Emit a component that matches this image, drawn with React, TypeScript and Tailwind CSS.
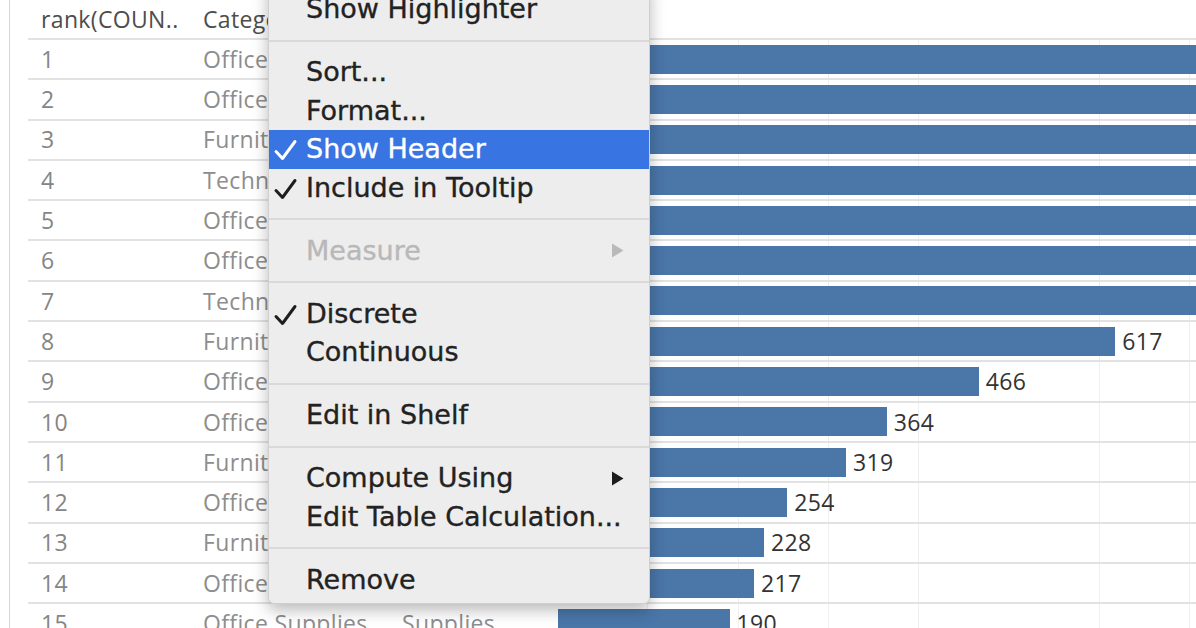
import React from "react";

type Row = { rank: number; cat: string; sub: string; value: number };

const rows: Row[] = [
  { rank: 1, cat: "Office Supplies", sub: "Binders", value: 1523 },
  { rank: 2, cat: "Office Supplies", sub: "Paper", value: 1370 },
  { rank: 3, cat: "Furniture", sub: "Furnishings", value: 957 },
  { rank: 4, cat: "Technology", sub: "Phones", value: 889 },
  { rank: 5, cat: "Office Supplies", sub: "Storage", value: 846 },
  { rank: 6, cat: "Office Supplies", sub: "Art", value: 796 },
  { rank: 7, cat: "Technology", sub: "Accessories", value: 775 },
  { rank: 8, cat: "Furniture", sub: "Chairs", value: 617 },
  { rank: 9, cat: "Office Supplies", sub: "Appliances", value: 466 },
  { rank: 10, cat: "Office Supplies", sub: "Labels", value: 364 },
  { rank: 11, cat: "Furniture", sub: "Tables", value: 319 },
  { rank: 12, cat: "Office Supplies", sub: "Envelopes", value: 254 },
  { rank: 13, cat: "Furniture", sub: "Bookcases", value: 228 },
  { rank: 14, cat: "Office Supplies", sub: "Fasteners", value: 217 },
  { rank: 15, cat: "Office Supplies", sub: "Supplies", value: 190 },
];

const SCALE = 0.903;

function Check({ white }: { white?: boolean }) {
  return (
    <svg width="26" height="22" viewBox="0 0 26 22" className="shrink-0">
      <path
        d="M3 12.5 L9.5 19.5 L22 2.5"
        fill="none"
        stroke={white ? "#ffffff" : "#1e1e1e"}
        strokeWidth="3"
        strokeLinecap="round"
        strokeLinejoin="round"
      />
    </svg>
  );
}

function Arrow({ gray }: { gray?: boolean }) {
  return (
    <svg width="13" height="15" viewBox="0 0 13 15" className="shrink-0">
      <path d="M1 0.5 L12.5 7.5 L1 14.5 Z" fill={gray ? "#b9b9b9" : "#1c1c1c"} />
    </svg>
  );
}

type Item = {
  label: string;
  check?: boolean;
  active?: boolean;
  disabled?: boolean;
  arrow?: boolean;
};

function MenuItem({ item }: { item: Item }) {
  const color = item.active
    ? "text-white bg-[#3874e2]"
    : item.disabled
    ? "text-[#b8b8b8]"
    : "text-[#222222]";
  return (
    <div className={`relative flex h-[38.5px] items-center pl-[37px] pr-[25px] ${color}`}>
      {item.check && (
        <div className="absolute left-[4px] top-[9px]">
          <Check white={item.active} />
        </div>
      )}
      <span className="flex-1 whitespace-nowrap [-webkit-text-stroke:0.35px]">{item.label}</span>
      {item.arrow && <Arrow gray={item.disabled} />}
    </div>
  );
}

function Sep() {
  return (
    <div className="flex h-[24.5px] items-center">
      <div className="h-[2px] w-full bg-[#d9d9d9]" />
    </div>
  );
}

export default function App() {
  return (
    <div className="relative flex h-[628px] w-[1196px] overflow-hidden bg-white font-['Open_Sans',sans-serif]">
      <div className="w-[9px] shrink-0" />
      <div className="flex-1 border-l border-[#d6d6d6]">
        {/* header */}
        <div className="ml-[18px] flex h-[40px] items-center border-b-2 border-[#e2e2e2] text-[23px] tracking-[0.35px] text-[#4d4d4d]">
          <div className="w-[175px] shrink-0 pl-[13px] whitespace-nowrap">rank(COUN..</div>
          <div className="w-[197px] shrink-0 whitespace-nowrap">Category</div>
          <div className="w-[158px] shrink-0 pl-[2px] whitespace-nowrap">Sub-Category</div>
          <div className="flex-1" />
        </div>
        {rows.map((r) => (
          <div
            key={r.rank}
            className="ml-[18px] flex h-[40.3px] items-center border-b-2 border-[#e2e2e2] text-[23px] tracking-[0.35px]"
          >
            <div className="w-[175px] shrink-0 pl-[13px] text-[#858585]">{r.rank}</div>
            <div className="w-[197px] shrink-0 whitespace-nowrap text-[#8d8d8d]">{r.cat}</div>
            <div className="w-[158px] shrink-0 whitespace-nowrap pl-[2px] text-[#8d8d8d]">{r.sub}</div>
            <div className="flex h-full flex-1 items-center overflow-hidden bg-[repeating-linear-gradient(90deg,transparent_0px,transparent_89.3px,#efefef_89.3px,#efefef_90.3px)]">
              <div
                className="h-[29px] shrink-0 bg-[#4a76a8]"
                style={{ width: `${r.value * SCALE}px` }}
              />
              <span className="ml-[7px] shrink-0 text-[#333333]">{r.value}</span>
            </div>
          </div>
        ))}
      </div>

      {/* context menu */}
      <div className="absolute left-[268px] top-[-17px] w-[382px] rounded-b-[6px] border border-[#cfcfcf] bg-[#ededed] pt-[6px] pb-[4px] font-['DejaVu_Sans',sans-serif] text-[27px] shadow-[0_6px_16px_rgba(0,0,0,0.28)]">
        <MenuItem item={{ label: "Show Highlighter" }} />
        <Sep />
        <MenuItem item={{ label: "Sort..." }} />
        <MenuItem item={{ label: "Format..." }} />
        <MenuItem item={{ label: "Show Header", check: true, active: true }} />
        <MenuItem item={{ label: "Include in Tooltip", check: true }} />
        <Sep />
        <MenuItem item={{ label: "Measure", disabled: true, arrow: true }} />
        <Sep />
        <MenuItem item={{ label: "Discrete", check: true }} />
        <MenuItem item={{ label: "Continuous" }} />
        <Sep />
        <MenuItem item={{ label: "Edit in Shelf" }} />
        <Sep />
        <MenuItem item={{ label: "Compute Using", arrow: true }} />
        <MenuItem item={{ label: "Edit Table Calculation..." }} />
        <Sep />
        <MenuItem item={{ label: "Remove" }} />
      </div>
    </div>
  );
}
